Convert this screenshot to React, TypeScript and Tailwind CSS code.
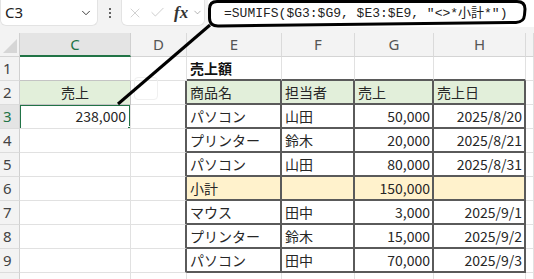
import React from "react";
import { ChevronDown, X, Check } from "lucide-react";

type Row = {
  n: number;
  e?: string;
  f?: string;
  g?: string;
  h?: string;
  kind?: "title" | "head" | "data" | "sub" | "none";
};

const rows: Row[] = [
  { n: 1, e: "売上額", kind: "title" },
  { n: 2, e: "商品名", f: "担当者", g: "売上", h: "売上日", kind: "head" },
  { n: 3, e: "パソコン", f: "山田", g: "50,000", h: "2025/8/20", kind: "data" },
  { n: 4, e: "プリンター", f: "鈴木", g: "20,000", h: "2025/8/21", kind: "data" },
  { n: 5, e: "パソコン", f: "山田", g: "80,000", h: "2025/8/31", kind: "data" },
  { n: 6, e: "小計", f: "", g: "150,000", h: "", kind: "sub" },
  { n: 7, e: "マウス", f: "田中", g: "3,000", h: "2025/9/1", kind: "data" },
  { n: 8, e: "プリンター", f: "鈴木", g: "15,000", h: "2025/9/2", kind: "data" },
  { n: 9, e: "パソコン", f: "田中", g: "70,000", h: "2025/9/3", kind: "data" },
  { n: 10, kind: "none" },
];

const base = "flex items-center overflow-hidden whitespace-nowrap";
const light = "border-r border-b border-r-[#e1e1e1] border-b-[#e1e1e1]";
const dark = "border-r-2 border-b-2 border-r-[#5a5a5a] border-b-[#5a5a5a]";
const aboveTable = "border-r border-b-2 border-r-[#e1e1e1] border-b-[#5a5a5a]";
const leftOfTable = "border-r-2 border-b border-r-[#5a5a5a] border-b-[#e1e1e1]";

function Toolbar() {
  return (
    <div className="flex h-[33px] items-start bg-[#f3f3f3]">
      <div className="flex h-[26px] w-[98px] items-center justify-between rounded-b-[6px] border border-t-0 border-[#e3e3e3] bg-white pl-[4px] pr-[4px]">
        <span className="text-[15px] text-[#222] font-['Noto_Sans',sans-serif]">C3</span>
        <ChevronDown size={14} strokeWidth={1.6} className="text-[#333]" />
      </div>
      <div className="flex h-[26px] w-[23px] flex-col items-center justify-center gap-[2px]">
        <span className="h-[2px] w-[2px] rounded-full bg-[#333]" />
        <span className="h-[2px] w-[2px] rounded-full bg-[#333]" />
        <span className="h-[2px] w-[2px] rounded-full bg-[#333]" />
      </div>
      <div className="flex h-[26px] w-[84px] items-center rounded-b-[6px] border border-t-0 border-[#e3e3e3] bg-white pl-[5px]">
        <X size={16} strokeWidth={1.1} className="text-[#c0c0c0]" />
        <Check size={17} strokeWidth={1.1} className="ml-[6px] text-[#c0c0c0]" />
        <span className="ml-[8px] text-[17px] italic font-bold text-[#333] font-['Liberation_Serif',serif] leading-none">fx</span>
        <ChevronDown size={11} strokeWidth={1.4} className="ml-[4px] text-[#888]" />
      </div>
      <div className="ml-[3px] flex h-[27px] flex-1 items-center bg-white pl-[16px]">
        <span className="text-[13px] text-[#222] font-['Liberation_Mono','Noto_Sans_CJK_JP',monospace]">
          =SUMIFS($G3:$G9, $E3:$E9, "&lt;&gt;*小計*")
        </span>
      </div>
    </div>
  );
}

function HeaderRow() {
  const hdr = "justify-center bg-[#f3f3f3] text-[15px] text-[#555] border-r border-b border-r-[#dadada] border-b-[#d4d4d4] font-['Noto_Sans',sans-serif]";
  return (
    <>
      <div className={`${base} relative bg-[#f3f3f3] border-r border-b border-r-[#d0d0d0] border-b-[#d4d4d4]`}>
        <svg width="20" height="24" className="absolute left-0 top-0">
          <polygon points="17,6 17,20 3,20" fill="#d6d6d6" />
        </svg>
      </div>
      <div className={`${base} justify-center bg-[#e4e4e4] text-[15px] text-[#217346] border-r border-b-2 border-r-[#d0d0d0] border-b-[#217346] font-['Noto_Sans',sans-serif]`}>C</div>
      <div className={`${base} ${hdr}`}>D</div>
      <div className={`${base} ${hdr}`}>E</div>
      <div className={`${base} ${hdr}`}>F</div>
      <div className={`${base} ${hdr}`}>G</div>
      <div className={`${base} ${hdr}`}>H</div>
      <div className={`${base} ${hdr}`}></div>
    </>
  );
}

function DataRow({ r }: { r: Row }) {
  const inTable = r.kind === "head" || r.kind === "data" || r.kind === "sub";
  const rowHead =
    r.n === 3
      ? `${base} pl-[3px] bg-[#e4e4e4] text-[15px] text-[#217346] border-r border-b border-r-[#d0d0d0] border-b-[#dcdcdc] font-['Noto_Sans',sans-serif]`
      : `${base} pl-[3px] bg-[#f3f3f3] text-[15px] text-[#444] border-r border-b border-r-[#d0d0d0] border-b-[#dcdcdc] font-['Noto_Sans',sans-serif]`;

  let cCell: React.ReactNode;
  if (r.n === 1) {
    cCell = <div className={`${base} border-r border-b border-r-[#e1e1e1] border-b-[#c4c4c4]`} />;
  } else if (r.n === 2) {
    cCell = (
      <div className={`${base} justify-center bg-[#e2efda] border-r border-b border-r-[#c4c4c4] border-b-[#c4c4c4]`}>
        売上
      </div>
    );
  } else if (r.n === 3) {
    cCell = (
      <div className={`${base} relative justify-end pr-[4px] ${light}`}>
        238,000
        <div className="pointer-events-none absolute -left-[1px] -top-[1px] h-[26px] w-[112px] border-2 border-[#217346]" />
        <div className="pointer-events-none absolute -bottom-[4px] -right-[3px] h-[6px] w-[6px] border border-white bg-[#217346]" />
      </div>
    );
  } else {
    cCell = <div className={`${base} ${light}`} />;
  }

  const dCls = inTable ? leftOfTable : light;

  let tCls = light;
  let bg = "";
  if (r.kind === "title") tCls = aboveTable;
  if (inTable) tCls = dark;
  if (r.kind === "head") bg = "bg-[#e2efda]";
  if (r.kind === "sub") bg = "bg-[#fff2cc]";

  return (
    <>
      <div className={rowHead}>{r.n < 10 ? r.n : ""}</div>
      {cCell}
      <div className={`${base} ${dCls}`} />
      <div className={`${base} pl-[3px] ${tCls} ${bg} ${r.kind === "title" ? "font-bold text-[#111]" : ""}`}>{r.e}</div>
      <div className={`${base} pl-[3px] ${tCls} ${bg}`}>{r.f}</div>
      <div className={`${base} ${r.kind === "head" ? "pl-[3px]" : "justify-end pr-[2px]"} ${tCls} ${bg}`}>{r.g}</div>
      <div className={`${base} ${r.kind === "head" ? "pl-[3px]" : "justify-end pr-[2px]"} ${tCls} ${bg}`}>{r.h}</div>
      <div className={`${base} ${light}`} />
    </>
  );
}

export default function App() {
  return (
    <div className="relative h-[279px] w-[534px] overflow-hidden bg-white font-['Noto_Sans_CJK_JP',sans-serif] text-[14px] text-[#262626]">
      <Toolbar />
      <div className="grid grid-cols-[20px_111px_56px_95px_73px_79px_92px_1fr] grid-rows-[24px_repeat(10,24px)]">
        <HeaderRow />
        {rows.map((r) => (
          <DataRow key={r.n} r={r} />
        ))}
      </div>
      <div className="pointer-events-none absolute left-[134px] top-[77px] h-[23px] w-[24px] rounded-[4px] border border-[#f0f0f0]" />
      <svg className="pointer-events-none absolute left-0 top-0" width="534" height="279">
        <path
          d="M 217 1.5 L 517 1.5 Q 525 1.5 525 9 L 524.5 15 Q 524 22 516 22.5 L 219 26 Q 209.5 26.5 209.5 18 L 209.5 9 Q 209.5 1.5 217 1.5 Z"
          fill="none"
          stroke="#000"
          strokeWidth="3"
        />
        <line x1="118" y1="104" x2="210" y2="25" stroke="#000" strokeWidth="3" />
      </svg>
    </div>
  );
}
